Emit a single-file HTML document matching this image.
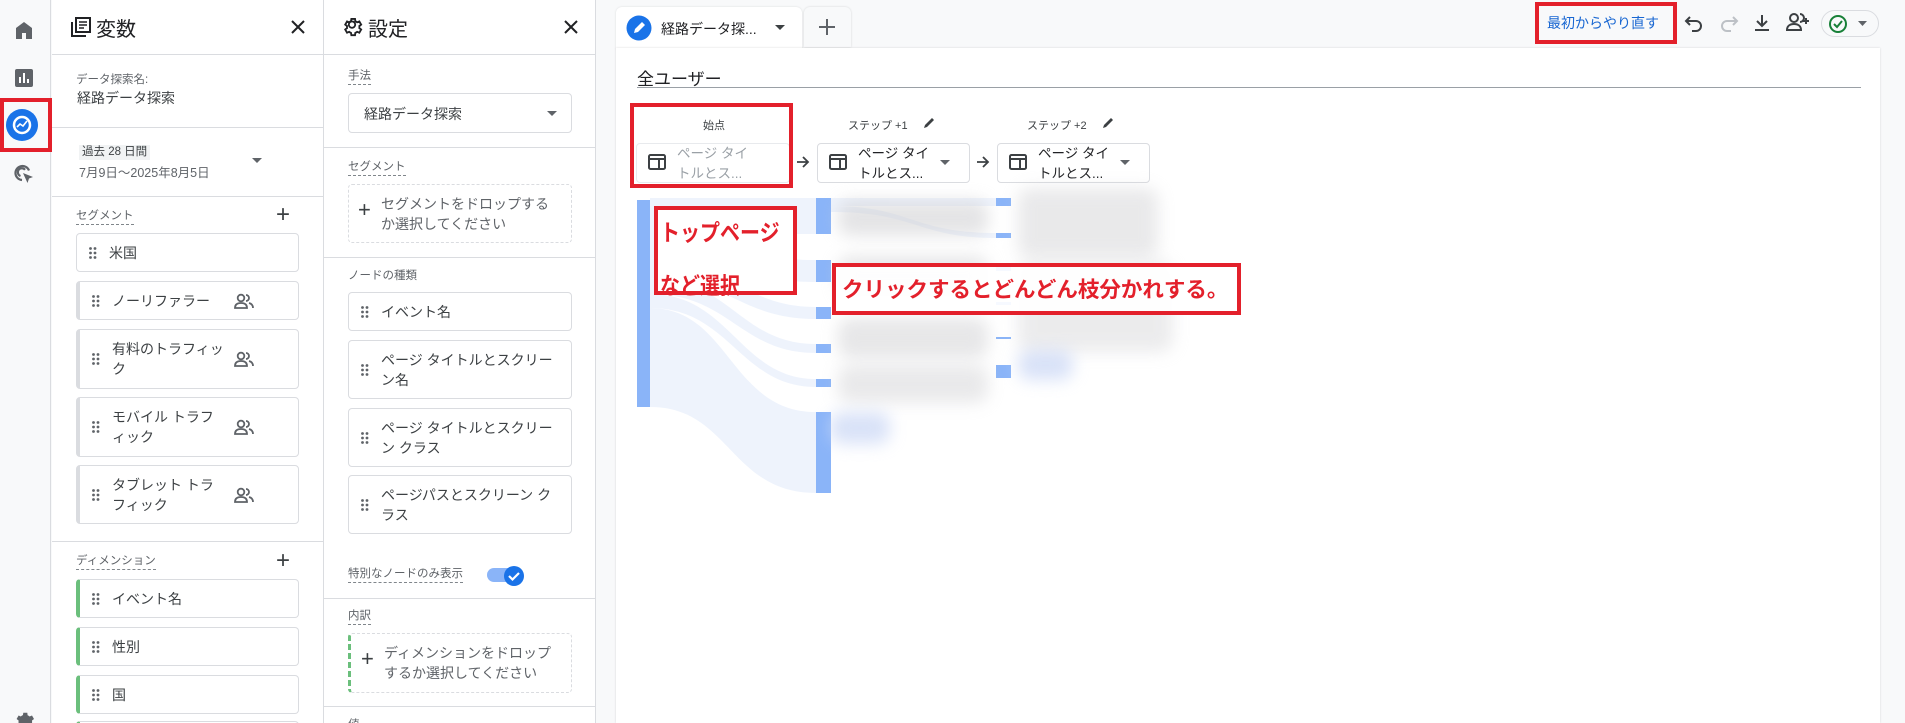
<!DOCTYPE html>
<html><head><meta charset="utf-8">
<style>
*{box-sizing:border-box;margin:0;padding:0}
html{width:1905px;height:723px;overflow:hidden}
body{width:1905px;height:723px;overflow:hidden;background:#f8f9fa;font-family:"Liberation Sans","Noto Sans CJK JP",sans-serif;color:#3c4043;position:relative}
.a{position:absolute}
.panel{position:absolute;top:0;height:723px;background:#fff;border-right:1px solid #dadce0;overflow:hidden}
.hr{position:absolute;left:0;right:0;height:1px;background:#dadce0}
.lbl{position:absolute;font-size:11.5px;color:#5f6368;border-bottom:1px dashed #80868b;padding-bottom:1px;line-height:14px}
.item{position:absolute;left:24px;width:223px;border:1px solid #dadce0;border-radius:4px;background:#fff;font-size:14px;color:#3c4043;line-height:20px}
.seg{border-left:4px solid #dadce0}
.dim{border-left:4px solid #6bbf7c}
.item .t{position:absolute;left:32px;top:50%;transform:translateY(-50%)}
.grip{position:absolute;left:12px;top:50%;transform:translateY(-50%);width:8px;height:12px}
.ppl{position:absolute;right:44px;top:50%;transform:translateY(-50%)}
.blob{position:absolute;background:#cfcfd2;filter:blur(8px);border-radius:12px}
.bar{position:absolute;background:#8ab4f8}
.red{position:absolute;border:4px solid #e3202b}
</style></head><body>

<!-- sidebar -->
<div class="a" style="left:0;top:0;width:51px;height:723px;background:#f8f9fa;border-right:1px solid #dadce0"></div>
<svg class="a" style="left:12px;top:18px" width="24" height="24" viewBox="0 0 24 24"><path d="M4 21V10l8-6 8 6v11h-6v-6h-4v6z" fill="#5f6368"/></svg>
<svg class="a" style="left:14px;top:68px" width="20" height="20" viewBox="0 0 20 20"><rect x="1" y="1" width="18" height="18" rx="2" fill="#5f6368"/><rect x="5" y="9" width="2" height="6" fill="#fff"/><rect x="9" y="5" width="2" height="10" fill="#fff"/><rect x="13" y="11" width="2" height="4" fill="#fff"/></svg>
<svg class="a" style="left:5px;top:108px" width="34" height="34" viewBox="0 0 34 34"><circle cx="17" cy="17" r="16" fill="#1a73e8"/><circle cx="17" cy="17" r="8" fill="none" stroke="#fff" stroke-width="2.5"/><path d="M12 19l3-3 3 2 4-5" fill="none" stroke="#fff" stroke-width="1.6"/></svg>
<div class="red" style="left:0;top:98px;width:52px;height:54px"></div>
<svg class="a" style="left:12px;top:162px" width="24" height="24" viewBox="0 0 24 24"><path d="M17 8.5A7 7 0 1 0 10 18" fill="none" stroke="#5f6368" stroke-width="2.2"/><path d="M13 7.8A4 4 0 1 0 8.5 14" fill="none" stroke="#5f6368" stroke-width="2.2"/><path d="M11 11l10 4-4 1.5-1.5 4.5z" fill="#5f6368"/></svg>
<svg class="a" style="left:12px;top:707px" width="24" height="24" viewBox="0 0 24 24"><path d="M12 8a4 4 0 100 8 4 4 0 000-8zm8 5.5l2-1.5-2-3.5-2.4 1a7 7 0 00-2-1.2L15.3 5.8h-4l-.4 2.5a7 7 0 00-2 1.2l-2.3-1-2 3.5 2 1.5a7 7 0 000 2.3l-2 1.5 2 3.5 2.3-1a7 7 0 002 1.2l.4 2.5h4l.3-2.5a7 7 0 002-1.2l2.4 1 2-3.5-2-1.5a7 7 0 000-2.3z" fill="#5f6368"/></svg>

<!-- variables panel -->
<div class="panel" style="left:52px;width:272px">
  <svg class="a" style="left:18px;top:16px" width="22" height="22" viewBox="0 0 22 22"><rect x="6" y="2" width="14" height="14" fill="none" stroke="#202124" stroke-width="2"/><path d="M2 6v14h14" fill="none" stroke="#202124" stroke-width="2"/><path d="M9 6h8M9 9h8M9 12h5" stroke="#202124" stroke-width="1.6"/></svg>
  <div class="a" style="left:44px;top:13px;font-size:20px;color:#202124">変数</div>
  <svg class="a" style="left:237px;top:18px" width="18" height="18" viewBox="0 0 18 18"><path d="M3 3l12 12M15 3L3 15" stroke="#202124" stroke-width="2"/></svg>
  <div class="hr" style="top:54px"></div>
  <div class="a" style="left:24px;top:71px;font-size:11.5px;color:#5f6368">データ探索名:</div>
  <div class="a" style="left:25px;top:88px;font-size:14px;color:#3c4043">経路データ探索</div>
  <div class="hr" style="top:127px"></div>
  <div class="a" style="left:27px;top:145px;font-size:11.5px;color:#3c4043;background:#f1f3f4;padding:0 3px;line-height:15px">過去 28 日間</div>
  <div class="a" style="left:27px;top:162px;font-size:12.5px;color:#5f6368">7月9日～2025年8月5日</div>
  <svg class="a" style="left:200px;top:158px" width="10" height="6"><path d="M0 0h10L5 5z" fill="#5f6368"/></svg>
  <div class="hr" style="top:196px"></div>
  <div class="lbl" style="left:24px;top:209px">セグメント</div>
  <div class="a" style="left:224px;top:203px;font-size:24px;color:#3c4043;line-height:24px">+</div>
  <div class="item" style="top:233px;height:39px;border-left:1px solid #dadce0"><svg class="grip" viewBox="0 0 8 12"><g fill="#5f6368"><circle cx="1.5" cy="1.5" r="1.4"/><circle cx="6" cy="1.5" r="1.4"/><circle cx="1.5" cy="6" r="1.4"/><circle cx="6" cy="6" r="1.4"/><circle cx="1.5" cy="10.5" r="1.4"/><circle cx="6" cy="10.5" r="1.4"/></g></svg><span class="t">米国</span></div>
  <div class="item seg" style="top:281px;height:39px"><svg class="grip" viewBox="0 0 8 12"><g fill="#5f6368"><circle cx="1.5" cy="1.5" r="1.4"/><circle cx="6" cy="1.5" r="1.4"/><circle cx="1.5" cy="6" r="1.4"/><circle cx="6" cy="6" r="1.4"/><circle cx="1.5" cy="10.5" r="1.4"/><circle cx="6" cy="10.5" r="1.4"/></g></svg><span class="t">ノーリファラー</span><svg class="ppl" width="20" height="16" viewBox="0 0 20 16"><circle cx="7" cy="5" r="3.3" fill="none" stroke="#5f6368" stroke-width="1.8"/><path d="M1 15c0-4 3-5 6-5s6 1 6 5zM12 2a3 3 0 010 6M15 10c2 .5 4 2 4 5" fill="none" stroke="#5f6368" stroke-width="1.8"/></svg></div>
  <div class="item seg" style="top:329px;height:60px"><svg class="grip" viewBox="0 0 8 12"><g fill="#5f6368"><circle cx="1.5" cy="1.5" r="1.4"/><circle cx="6" cy="1.5" r="1.4"/><circle cx="1.5" cy="6" r="1.4"/><circle cx="6" cy="6" r="1.4"/><circle cx="1.5" cy="10.5" r="1.4"/><circle cx="6" cy="10.5" r="1.4"/></g></svg><span class="t">有料のトラフィッ<br>ク</span><svg class="ppl" width="20" height="16" viewBox="0 0 20 16"><circle cx="7" cy="5" r="3.3" fill="none" stroke="#5f6368" stroke-width="1.8"/><path d="M1 15c0-4 3-5 6-5s6 1 6 5zM12 2a3 3 0 010 6M15 10c2 .5 4 2 4 5" fill="none" stroke="#5f6368" stroke-width="1.8"/></svg></div>
  <div class="item seg" style="top:397px;height:60px"><svg class="grip" viewBox="0 0 8 12"><g fill="#5f6368"><circle cx="1.5" cy="1.5" r="1.4"/><circle cx="6" cy="1.5" r="1.4"/><circle cx="1.5" cy="6" r="1.4"/><circle cx="6" cy="6" r="1.4"/><circle cx="1.5" cy="10.5" r="1.4"/><circle cx="6" cy="10.5" r="1.4"/></g></svg><span class="t">モバイル トラフ<br>ィック</span><svg class="ppl" width="20" height="16" viewBox="0 0 20 16"><circle cx="7" cy="5" r="3.3" fill="none" stroke="#5f6368" stroke-width="1.8"/><path d="M1 15c0-4 3-5 6-5s6 1 6 5zM12 2a3 3 0 010 6M15 10c2 .5 4 2 4 5" fill="none" stroke="#5f6368" stroke-width="1.8"/></svg></div>
  <div class="item seg" style="top:465px;height:59px"><svg class="grip" viewBox="0 0 8 12"><g fill="#5f6368"><circle cx="1.5" cy="1.5" r="1.4"/><circle cx="6" cy="1.5" r="1.4"/><circle cx="1.5" cy="6" r="1.4"/><circle cx="6" cy="6" r="1.4"/><circle cx="1.5" cy="10.5" r="1.4"/><circle cx="6" cy="10.5" r="1.4"/></g></svg><span class="t">タブレット トラ<br>フィック</span><svg class="ppl" width="20" height="16" viewBox="0 0 20 16"><circle cx="7" cy="5" r="3.3" fill="none" stroke="#5f6368" stroke-width="1.8"/><path d="M1 15c0-4 3-5 6-5s6 1 6 5zM12 2a3 3 0 010 6M15 10c2 .5 4 2 4 5" fill="none" stroke="#5f6368" stroke-width="1.8"/></svg></div>
  <div class="hr" style="top:541px"></div>
  <div class="lbl" style="left:24px;top:554px">ディメンション</div>
  <div class="a" style="left:224px;top:549px;font-size:24px;color:#3c4043;line-height:24px">+</div>
  <div class="item dim" style="top:579px;height:39px"><svg class="grip" viewBox="0 0 8 12"><g fill="#5f6368"><circle cx="1.5" cy="1.5" r="1.4"/><circle cx="6" cy="1.5" r="1.4"/><circle cx="1.5" cy="6" r="1.4"/><circle cx="6" cy="6" r="1.4"/><circle cx="1.5" cy="10.5" r="1.4"/><circle cx="6" cy="10.5" r="1.4"/></g></svg><span class="t">イベント名</span></div>
  <div class="item dim" style="top:627px;height:39px"><svg class="grip" viewBox="0 0 8 12"><g fill="#5f6368"><circle cx="1.5" cy="1.5" r="1.4"/><circle cx="6" cy="1.5" r="1.4"/><circle cx="1.5" cy="6" r="1.4"/><circle cx="6" cy="6" r="1.4"/><circle cx="1.5" cy="10.5" r="1.4"/><circle cx="6" cy="10.5" r="1.4"/></g></svg><span class="t">性別</span></div>
  <div class="item dim" style="top:675px;height:39px"><svg class="grip" viewBox="0 0 8 12"><g fill="#5f6368"><circle cx="1.5" cy="1.5" r="1.4"/><circle cx="6" cy="1.5" r="1.4"/><circle cx="1.5" cy="6" r="1.4"/><circle cx="6" cy="6" r="1.4"/><circle cx="1.5" cy="10.5" r="1.4"/><circle cx="6" cy="10.5" r="1.4"/></g></svg><span class="t">国</span></div>
  <div class="item dim" style="top:721px;height:10px"></div>
</div>

<!-- settings panel -->
<div class="panel" style="left:323px;width:273px;border-left:1px solid #dadce0">
  <svg class="a" style="left:17px;top:15px" width="22" height="22" viewBox="0 0 24 24"><path d="M12 8.5a3.5 3.5 0 100 7 3.5 3.5 0 000-7zm8 5l2-1.5-2-3.5-2.4 1a7 7 0 00-2-1.2L15.3 5.8h-4l-.4 2.5a7 7 0 00-2 1.2l-2.3-1-2 3.5 2 1.5a7 7 0 000 2.3l-2 1.5 2 3.5 2.3-1a7 7 0 002 1.2l.4 2.5h4l.3-2.5a7 7 0 002-1.2l2.4 1 2-3.5-2-1.5a7 7 0 000-2.3z" fill="none" stroke="#202124" stroke-width="2" transform="translate(0,-1.5)"/></svg>
  <div class="a" style="left:44px;top:13px;font-size:20px;color:#202124">設定</div>
  <svg class="a" style="left:238px;top:18px" width="18" height="18" viewBox="0 0 18 18"><path d="M3 3l12 12M15 3L3 15" stroke="#202124" stroke-width="2"/></svg>
  <div class="hr" style="top:54px"></div>
  <div class="lbl" style="left:24px;top:69px">手法</div>
  <div class="a" style="left:24px;top:93px;width:224px;height:40px;border:1px solid #dadce0;border-radius:4px;font-size:14px;padding:10px 0 0 15px;color:#3c4043">経路データ探索<svg class="a" style="right:14px;top:17px" width="10" height="6"><path d="M0 0h10L5 5z" fill="#5f6368"/></svg></div>
  <div class="hr" style="top:147px"></div>
  <div class="lbl" style="left:24px;top:160px">セグメント</div>
  <div class="a" style="left:24px;top:184px;width:224px;height:59px;border:1px dashed #dadce0;border-radius:4px;font-size:14px;color:#5f6368;line-height:20px;padding:9px 0 0 32px">セグメントをドロップする<br>か選択してください<span class="a" style="left:9px;top:15px;font-size:22px;color:#3c4043">+</span></div>
  <div class="hr" style="top:257px"></div>
  <div class="a" style="left:24px;top:267px;font-size:11.5px;color:#5f6368">ノードの種類</div>
  <div class="item" style="top:292px;height:39px;width:224px"><svg class="grip" viewBox="0 0 8 12"><g fill="#5f6368"><circle cx="1.5" cy="1.5" r="1.4"/><circle cx="6" cy="1.5" r="1.4"/><circle cx="1.5" cy="6" r="1.4"/><circle cx="6" cy="6" r="1.4"/><circle cx="1.5" cy="10.5" r="1.4"/><circle cx="6" cy="10.5" r="1.4"/></g></svg><span class="t">イベント名</span></div>
  <div class="item" style="top:340px;height:59px;width:224px"><svg class="grip" viewBox="0 0 8 12"><g fill="#5f6368"><circle cx="1.5" cy="1.5" r="1.4"/><circle cx="6" cy="1.5" r="1.4"/><circle cx="1.5" cy="6" r="1.4"/><circle cx="6" cy="6" r="1.4"/><circle cx="1.5" cy="10.5" r="1.4"/><circle cx="6" cy="10.5" r="1.4"/></g></svg><span class="t">ページ タイトルとスクリー<br>ン名</span></div>
  <div class="item" style="top:408px;height:59px;width:224px"><svg class="grip" viewBox="0 0 8 12"><g fill="#5f6368"><circle cx="1.5" cy="1.5" r="1.4"/><circle cx="6" cy="1.5" r="1.4"/><circle cx="1.5" cy="6" r="1.4"/><circle cx="6" cy="6" r="1.4"/><circle cx="1.5" cy="10.5" r="1.4"/><circle cx="6" cy="10.5" r="1.4"/></g></svg><span class="t">ページ タイトルとスクリー<br>ン クラス</span></div>
  <div class="item" style="top:475px;height:59px;width:224px"><svg class="grip" viewBox="0 0 8 12"><g fill="#5f6368"><circle cx="1.5" cy="1.5" r="1.4"/><circle cx="6" cy="1.5" r="1.4"/><circle cx="1.5" cy="6" r="1.4"/><circle cx="6" cy="6" r="1.4"/><circle cx="1.5" cy="10.5" r="1.4"/><circle cx="6" cy="10.5" r="1.4"/></g></svg><span class="t">ページパスとスクリーン ク<br>ラス</span></div>
  <div class="lbl" style="left:24px;top:567px">特別なノードのみ表示</div>
  <div class="a" style="left:163px;top:568px;width:30px;height:14px;border-radius:7px;background:#8ab4f8"></div>
  <svg class="a" style="left:179px;top:565px" width="22" height="22" viewBox="0 0 22 22"><circle cx="11" cy="11" r="10" fill="#1a73e8"/><path d="M6 11l3.5 3.5L16 8" fill="none" stroke="#fff" stroke-width="2.2"/></svg>
  <div class="hr" style="top:598px"></div>
  <div class="lbl" style="left:24px;top:609px">内訳</div>
  <div class="a" style="left:24px;top:633px;width:224px;height:60px;border:1px dashed #dadce0;border-left:3px dashed #6bbf7c;border-radius:4px;font-size:14px;color:#5f6368;line-height:20px;padding:9px 0 0 33px">ディメンションをドロップ<br>するか選択してください<span class="a" style="left:10px;top:15px;font-size:22px;color:#3c4043">+</span></div>
  <div class="hr" style="top:706px"></div>
  <div class="a" style="left:24px;top:716px;font-size:11.5px;color:#5f6368">値</div>
</div>

<!-- tabs -->
<div class="a" style="left:616px;top:7px;width:186px;height:42px;background:#fff;border-radius:6px 6px 0 0;box-shadow:0 0 2px rgba(0,0,0,.12)"></div>
<svg class="a" style="left:626px;top:15px" width="26" height="26" viewBox="0 0 26 26"><circle cx="13" cy="13" r="12.5" fill="#1a73e8"/><path d="M8 18l1-4 7-7 3 3-7 7z" fill="#fff"/></svg>
<div class="a" style="left:661px;top:19px;font-size:14px;color:#202124">経路データ探...</div>
<svg class="a" style="left:775px;top:25px" width="10" height="6"><path d="M0 0h10L5 5z" fill="#3c4043"/></svg>
<div class="a" style="left:804px;top:7px;width:47px;height:40px;background:#f8f9fa;border-radius:6px 6px 0 0;box-shadow:0 0 2px rgba(0,0,0,.15)"></div>
<svg class="a" style="left:818px;top:18px" width="18" height="18"><path d="M9 1v16M1 9h16" stroke="#5f6368" stroke-width="2"/></svg>

<!-- top right -->
<div class="a" style="left:1547px;top:13px;font-size:14px;color:#1967d2">最初からやり直す</div>
<div class="red" style="left:1535px;top:2px;width:142px;height:42px"></div>
<svg class="a" style="left:1683px;top:12px" width="22" height="22" viewBox="0 0 22 22"><path d="M7 5L3 9l4 4" fill="none" stroke="#3c4043" stroke-width="2"/><path d="M3 9h10a5 5 0 010 10H9" fill="none" stroke="#3c4043" stroke-width="2"/></svg>
<svg class="a" style="left:1718px;top:12px" width="22" height="22" viewBox="0 0 22 22"><path d="M15 5l4 4-4 4" fill="none" stroke="#bdc1c6" stroke-width="2"/><path d="M19 9H9a5 5 0 000 10h4" fill="none" stroke="#bdc1c6" stroke-width="2"/></svg>
<svg class="a" style="left:1751px;top:12px" width="22" height="22" viewBox="0 0 22 22"><path d="M11 3v11M6 9l5 5 5-5M4 18h14" fill="none" stroke="#3c4043" stroke-width="2"/></svg>
<svg class="a" style="left:1785px;top:11px" width="26" height="22" viewBox="0 0 26 22"><circle cx="9" cy="7" r="4" fill="none" stroke="#3c4043" stroke-width="2"/><path d="M2 19c0-4 3-6 7-6s7 2 7 6z" fill="none" stroke="#3c4043" stroke-width="2"/><path d="M15 3a4 4 0 010 8M21 7v6M18 10h6" fill="none" stroke="#3c4043" stroke-width="2"/></svg>
<div class="a" style="left:1821px;top:10px;width:58px;height:27px;border:1px solid #dadce0;border-radius:14px;background:#f8f9fa"></div>
<svg class="a" style="left:1828px;top:14px" width="20" height="20" viewBox="0 0 20 20"><circle cx="10" cy="10" r="8" fill="none" stroke="#188038" stroke-width="2"/><path d="M6 10l3 3 5-6" fill="none" stroke="#188038" stroke-width="2"/></svg>
<svg class="a" style="left:1858px;top:21px" width="9" height="5"><path d="M0 0h9L4.5 5z" fill="#5f6368"/></svg>

<!-- main card -->
<div class="a" style="left:616px;top:48px;width:1264px;height:675px;background:#fff;box-shadow:0 0 2px rgba(0,0,0,.15)"></div>
<div class="a" style="left:637px;top:65px;font-size:17px;color:#202124">全ユーザー</div>
<div class="a" style="left:637px;top:87px;width:1224px;height:1px;background:#9aa0a6"></div>

<div class="a" style="left:703px;top:117px;font-size:11px;color:#3c4043">始点</div>
<div class="a" style="left:848px;top:117px;font-size:11px;color:#3c4043">ステップ +1</div>
<svg class="a" style="left:922px;top:116px" width="14" height="14" viewBox="0 0 14 14"><path d="M2 12l1-3 7-7 2 2-7 7z" fill="#3c4043"/></svg>
<div class="a" style="left:1027px;top:117px;font-size:11px;color:#3c4043">ステップ +2</div>
<svg class="a" style="left:1101px;top:116px" width="14" height="14" viewBox="0 0 14 14"><path d="M2 12l1-3 7-7 2 2-7 7z" fill="#3c4043"/></svg>

<div class="a" style="left:636px;top:143px;width:154px;height:40px;border:1px solid #e8eaed;border-radius:4px;font-size:13.5px;line-height:20px;color:#9aa0a6;padding:0 0 0 40px">ページ タイ<br>トルとス...</div>
<div class="a" style="left:817px;top:143px;width:153px;height:40px;border:1px solid #dadce0;border-radius:4px;font-size:13.5px;line-height:20px;color:#202124;padding:0 0 0 40px">ページ タイ<br>トルとス...</div>
<div class="a" style="left:997px;top:143px;width:153px;height:40px;border:1px solid #dadce0;border-radius:4px;font-size:13.5px;line-height:20px;color:#202124;padding:0 0 0 40px">ページ タイ<br>トルとス...</div>
<svg class="a" style="left:648px;top:154px" width="18" height="16" viewBox="0 0 18 16"><rect x="1" y="1" width="16" height="14" rx="1.5" fill="none" stroke="#3c4043" stroke-width="2"/><path d="M1 5h16M11 5v10" stroke="#3c4043" stroke-width="2"/></svg>
<svg class="a" style="left:829px;top:154px" width="18" height="16" viewBox="0 0 18 16"><rect x="1" y="1" width="16" height="14" rx="1.5" fill="none" stroke="#3c4043" stroke-width="2"/><path d="M1 5h16M11 5v10" stroke="#3c4043" stroke-width="2"/></svg>
<svg class="a" style="left:1009px;top:154px" width="18" height="16" viewBox="0 0 18 16"><rect x="1" y="1" width="16" height="14" rx="1.5" fill="none" stroke="#3c4043" stroke-width="2"/><path d="M1 5h16M11 5v10" stroke="#3c4043" stroke-width="2"/></svg>
<svg class="a" style="left:940px;top:160px" width="10" height="6"><path d="M0 0h10L5 5z" fill="#5f6368"/></svg>
<svg class="a" style="left:1120px;top:160px" width="10" height="6"><path d="M0 0h10L5 5z" fill="#5f6368"/></svg>
<svg class="a" style="left:795px;top:154px" width="16" height="16" viewBox="0 0 16 16"><path d="M2 8h11M8 3l5 5-5 5" fill="none" stroke="#3c4043" stroke-width="1.8"/></svg>
<svg class="a" style="left:975px;top:154px" width="16" height="16" viewBox="0 0 16 16"><path d="M2 8h11M8 3l5 5-5 5" fill="none" stroke="#3c4043" stroke-width="1.8"/></svg>
<div class="red" style="left:630px;top:103px;width:163px;height:85px"></div>

<!-- flows -->
<svg class="a" style="left:650px;top:198px" width="370" height="300" viewBox="0 0 370 300">
<g fill="#e8effc" opacity=".7">
<path d="M0 0h166v36H0z"/>
<path d="M0 36C80 36 90 62 166 62v22C90 84 80 60 0 60z"/>
<path d="M0 60C80 60 90 109 166 109v12C90 121 80 80 0 80z"/>
<path d="M0 80C80 80 90 146 166 146v9C90 155 80 96 0 96z"/>
<path d="M0 96C80 96 90 181 166 181v8C90 189 80 110 0 110z"/>
<path d="M0 110C80 110 80 214 166 214v81C80 295 80 209 0 209z"/>
<path d="M181 0h166v8H181zM181 8c80 0 80 27 166 27v5c-80 0-80-26-166-26z"/>
</g></svg>
<div class="bar" style="left:637px;top:200px;width:13px;height:207px"></div>
<div class="bar" style="left:816px;top:198px;width:15px;height:36px"></div>
<div class="bar" style="left:816px;top:260px;width:15px;height:22px"></div>
<div class="bar" style="left:816px;top:307px;width:15px;height:12px"></div>
<div class="bar" style="left:816px;top:344px;width:15px;height:9px"></div>
<div class="bar" style="left:816px;top:379px;width:15px;height:8px"></div>
<div class="bar" style="left:816px;top:412px;width:15px;height:81px"></div>
<div class="bar" style="left:996px;top:198px;width:15px;height:8px"></div>
<div class="bar" style="left:996px;top:233px;width:15px;height:5px"></div>
<div class="bar" style="left:996px;top:267px;width:15px;height:4px"></div>
<div class="bar" style="left:996px;top:302px;width:15px;height:3px"></div>
<div class="bar" style="left:996px;top:337px;width:15px;height:2px"></div>
<div class="bar" style="left:996px;top:365px;width:15px;height:13px"></div>

<div class="blob" style="left:838px;top:200px;width:150px;height:36px;opacity:.55"></div>
<div class="blob" style="left:838px;top:256px;width:150px;height:40px;opacity:.5"></div>
<div class="blob" style="left:838px;top:318px;width:150px;height:40px;opacity:.5"></div>
<div class="blob" style="left:838px;top:365px;width:150px;height:38px;opacity:.45"></div>
<div class="blob" style="left:830px;top:412px;width:60px;height:32px;background:#c9d6f5;opacity:.7"></div>
<div class="blob" style="left:1018px;top:188px;width:140px;height:70px;opacity:.45"></div>
<div class="blob" style="left:1018px;top:262px;width:155px;height:90px;opacity:.4"></div>
<div class="blob" style="left:1018px;top:350px;width:55px;height:30px;background:#c9d6f5;opacity:.7"></div>

<!-- annotations -->
<div class="red" style="left:654px;top:206px;width:143px;height:89px;background:#fff">
  <div style="position:absolute;left:2px;top:-3px;font-size:20px;font-weight:bold;color:#e3202b;line-height:46px;transform:scaleY(1.15);transform-origin:top left;white-space:nowrap">トップページ<br>など選択</div>
</div>
<div class="red" style="left:832px;top:263px;width:409px;height:52px;background:rgba(255,255,255,.92)">
  <div style="position:absolute;left:6px;top:6px;font-size:21.5px;font-weight:bold;color:#e3202b;line-height:34px;white-space:nowrap">クリックするとどんどん枝分かれする。</div>
</div>
</body></html>
